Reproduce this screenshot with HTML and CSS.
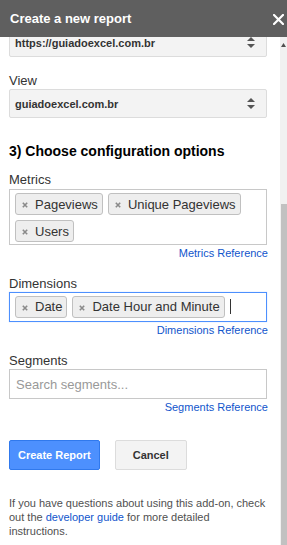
FILE: index.html
```html
<!DOCTYPE html>
<html>

<head>
    <title>Create a new report</title>
    <meta charset="utf-8">
    <link rel="stylesheet" href="styles.css">
</head>

<body>
    <div class="header">
        <span class="header-title">Create a new report</span>
        <svg class="close" width="11" height="11" viewBox="0 0 11 11">
            <path d="M1 1 L10 10 M10 1 L1 10" stroke="#fff" stroke-width="2.2" stroke-linecap="square" fill="none"/>
        </svg>
    </div>

    <div class="main">
        <div class="content">
            <div class="select select-first">
                <span>https://guiadoexcel.com.br</span>
                <svg class="updown" width="8" height="11" viewBox="0 0 8 11">
                    <path d="M4 0 L8 4 L0 4 Z M0 7 L8 7 L4 11 Z" fill="#555"/>
                </svg>
            </div>

            <div class="label label-view">View</div>
            <div class="select">
                <span>guiadoexcel.com.br</span>
                <svg class="updown" width="8" height="11" viewBox="0 0 8 11">
                    <path d="M4 0 L8 4 L0 4 Z M0 7 L8 7 L4 11 Z" fill="#555"/>
                </svg>
            </div>

            <h2 class="section-title">3) Choose configuration options</h2>

            <div class="label label-metrics">Metrics</div>
            <div class="token-box metrics">
                <span class="token"><svg class="token-x" width="6" height="6" viewBox="0 0 6 6"><path d="M0.8 0.8 L5.2 5.2 M5.2 0.8 L0.8 5.2" stroke="#8a8a8a" stroke-width="1.6"/></svg>Pageviews</span>
                <span class="token"><svg class="token-x" width="6" height="6" viewBox="0 0 6 6"><path d="M0.8 0.8 L5.2 5.2 M5.2 0.8 L0.8 5.2" stroke="#8a8a8a" stroke-width="1.6"/></svg>Unique Pageviews</span>
                <span class="token"><svg class="token-x" width="6" height="6" viewBox="0 0 6 6"><path d="M0.8 0.8 L5.2 5.2 M5.2 0.8 L0.8 5.2" stroke="#8a8a8a" stroke-width="1.6"/></svg>Users</span>
            </div>
            <a class="reference">Metrics Reference</a>

            <div class="label">Dimensions</div>
            <div class="token-box dimensions">
                <span class="token"><svg class="token-x" width="6" height="6" viewBox="0 0 6 6"><path d="M0.8 0.8 L5.2 5.2 M5.2 0.8 L0.8 5.2" stroke="#8a8a8a" stroke-width="1.6"/></svg>Date</span>
                <span class="token"><svg class="token-x" width="6" height="6" viewBox="0 0 6 6"><path d="M0.8 0.8 L5.2 5.2 M5.2 0.8 L0.8 5.2" stroke="#8a8a8a" stroke-width="1.6"/></svg>Date Hour and Minute</span>
                <span class="caret"></span>
            </div>
            <a class="reference">Dimensions Reference</a>

            <div class="label">Segments</div>
            <div class="search-box">Search segments...</div>
            <a class="reference">Segments Reference</a>

            <div class="buttons">
                <button class="btn btn-blue">Create Report</button>
                <button class="btn btn-gray">Cancel</button>
            </div>

            <p class="footer-text">If you have questions about using this add-on, check out the <a class="link">developer guide</a> for more detailed instructions.</p>
        </div>

        <div class="scrollbar">
            <svg class="scroll-arrow" width="5" height="4" viewBox="0 0 5 4">
                <path d="M2.5 0 L5 4 L0 4 Z" fill="#505050"/>
            </svg>
            <div class="scroll-thumb"></div>
        </div>
    </div>
</body>

</html>
```

FILE: styles.css
```css
body {
    margin: 0;
    width: 287px;
    height: 545px;
    display: flex;
    flex-direction: column;
    overflow: hidden;
    font-family: "Liberation Sans", Arial, sans-serif;
    color: #333;
    background-color: #fff;
}

.header {
    height: 37px;
    flex: none;
    background-color: #5f5f5f;
    display: flex;
    align-items: center;
    justify-content: space-between;
    padding: 0 3px 0 10px;
    position: relative;
    z-index: 2;
}

.header-title {
    color: #fff;
    font-size: 13px;
    font-weight: bold;
    margin-top: -1px;
}

.close {
    margin-top: 1px;
}

.main {
    flex: 1;
    display: flex;
    overflow: hidden;
}

.content {
    flex: 1;
    padding: 0 13px 0 9px;
}

.select {
    height: 29px;
    box-sizing: border-box;
    border: 1px solid #dcdcdc;
    background-color: #f3f3f3;
    border-radius: 2px;
    display: flex;
    align-items: center;
    justify-content: space-between;
    padding: 0 11px 0 5px;
    font-size: 11px;
    font-weight: bold;
    color: #333;
}

.select-first {
    margin-top: -9px;
}

.label {
    font-size: 13px;
    line-height: 15px;
    margin: 16px 0 1px;
}

.label-view {
    margin-top: 16px;
}

.label-metrics {
    margin-top: 0;
    margin-bottom: 2px;
}

.section-title {
    font-size: 14px;
    line-height: 17px;
    font-weight: bold;
    color: #000;
    margin: 25px 0 12px;
}

.token-box {
    box-sizing: border-box;
    border: 1px solid #c8c8c8;
    display: flex;
    flex-wrap: wrap;
    align-items: center;
    gap: 5px 5px;
}

.metrics {
    padding: 3px 5px 2px;
}

.dimensions {
    height: 30px;
    padding: 2px 5px 3px;
    border-color: #4d90fe;
    box-shadow: 0 0 1px rgba(77, 144, 254, 0.4);
}

.token {
    height: 22px;
    box-sizing: border-box;
    border: 1px solid #c0c0c0;
    border-radius: 3px;
    background-color: #eee;
    display: inline-flex;
    align-items: center;
    padding: 0 4px 0 6px;
    font-size: 13px;
    color: #333;
}

.token-x {
    margin-right: 7px;
    margin-top: 2px;
}

.caret {
    width: 1px;
    height: 15px;
    background-color: #333;
}

.reference {
    display: block;
    text-align: right;
    font-size: 11px;
    line-height: 13px;
    color: #15c;
    margin-top: 2px;
    margin-right: -1px;
}

.search-box {
    height: 30px;
    box-sizing: border-box;
    border: 1px solid #c8c8c8;
    padding: 0 6px;
    display: flex;
    align-items: center;
    font-size: 13px;
    color: #999;
}

.buttons {
    display: flex;
    gap: 15px;
    margin-top: 26px;
}

.btn {
    height: 30px;
    border-radius: 2px;
    font-family: "Liberation Sans", Arial, sans-serif;
    font-size: 11px;
    font-weight: bold;
    padding: 0 8px;
}

.btn-blue {
    background-color: #4d90fe;
    border: 1px solid #3079ed;
    color: #fff;
}

.btn-gray {
    min-width: 72px;
    background-color: #f3f3f3;
    border: 1px solid #dcdcdc;
    color: #333;
}

.footer-text {
    font-size: 11px;
    line-height: 14px;
    color: #505050;
    margin: 26px 0 0;
}

.link {
    color: #15c;
}

.scrollbar {
    width: 7px;
    flex: none;
    background-color: #f1f1f1;
    display: flex;
    flex-direction: column;
    align-items: center;
}

.scroll-arrow {
    margin-top: 6px;
}

.scroll-thumb {
    width: 6px;
    margin-top: 157px;
    flex: 1;
    background-color: #c1c1c1;
}
```
